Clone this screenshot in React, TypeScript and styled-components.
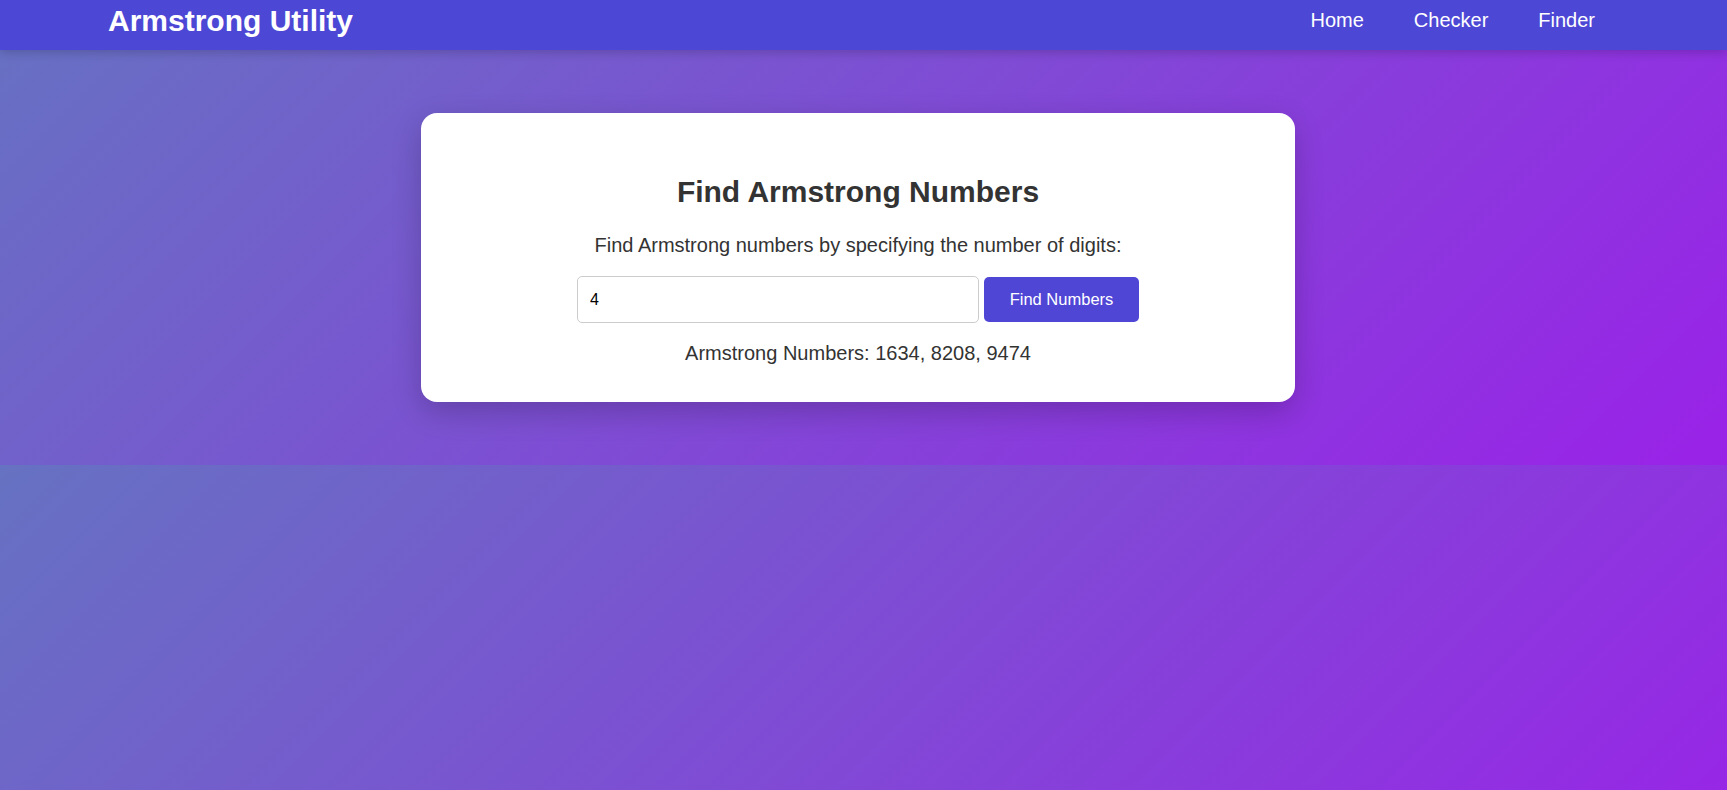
import React, { useState } from 'react';
import styled, { createGlobalStyle } from 'styled-components';

const GlobalStyle = createGlobalStyle`
  * {
    box-sizing: border-box;
  }
  body {
    margin: 0;
    font-family: "Liberation Sans", Arial, sans-serif;
    background: linear-gradient(135deg, #6672c2 0%, #9a22e8 100%);
  }
`;

const Header = styled.header`
  height: 50px;
  padding: 0 107px 9px 108px;
  display: flex;
  align-items: center;
  justify-content: space-between;
  background: #4d47d5;
  box-shadow: 0 2px 10px rgba(0, 0, 0, 0.2);
  position: relative;
`;

const Brand = styled.h1`
  margin: 0;
  font-size: 30px;
  font-weight: 700;
  color: #fff;
`;

const Nav = styled.nav`
  display: flex;
`;

const NavLink = styled.a`
  padding: 0 25px;
  font-size: 20px;
  color: #fff;
  text-decoration: none;
  cursor: pointer;
`;

const Main = styled.main`
  padding: 63px 11px 63px 0;
`;

const Card = styled.section`
  width: 874px;
  margin: 0 auto;
  padding: 62px 40px 37px;
  background: #fff;
  border-radius: 16px;
  box-shadow: 0 10px 30px rgba(0, 0, 0, 0.2);
  text-align: center;
  color: #333;
`;

const Title = styled.h2`
  margin: 0 0 25px;
  font-size: 30px;
  font-weight: 700;
`;

const Text = styled.p<{ $gap?: number }>`
  margin: 0 0 ${(p) => p.$gap ?? 0}px;
  font-size: 20px;
`;

const Row = styled.div`
  display: flex;
  justify-content: center;
  align-items: center;
  gap: 5px;
  margin-bottom: 19px;
`;

const Input = styled.input`
  width: 402px;
  height: 47px;
  padding: 0 12px;
  border: 1px solid #ccc;
  border-radius: 5px;
  font-family: inherit;
  font-size: 16px;
  color: #000;
  outline: none;
`;

const Button = styled.button`
  height: 45px;
  width: 155px;
  padding: 0;
  border: none;
  border-radius: 5px;
  background: #4f46d6;
  color: #fff;
  font-family: inherit;
  font-size: 16.5px;
  cursor: pointer;
`;

function isArmstrong(n: number) {
  const s = String(n);
  return s.split('').reduce((a, d) => a + Math.pow(Number(d), s.length), 0) === n;
}

function findArmstrong(digits: number) {
  const out: number[] = [];
  if (!digits || digits < 1 || digits > 6) return out;
  const start = digits === 1 ? 0 : Math.pow(10, digits - 1);
  for (let i = start; i < Math.pow(10, digits); i++) {
    if (isArmstrong(i)) out.push(i);
  }
  return out;
}

export default function App() {
  const [digits, setDigits] = useState('4');
  const [result, setResult] = useState<number[]>(findArmstrong(4));

  return (
    <>
      <GlobalStyle />
      <Header>
        <Brand>Armstrong Utility</Brand>
        <Nav>
          <NavLink>Home</NavLink>
          <NavLink>Checker</NavLink>
          <NavLink>Finder</NavLink>
        </Nav>
      </Header>
      <Main>
        <Card>
          <Title>Find Armstrong Numbers</Title>
          <Text $gap={19}>Find Armstrong numbers by specifying the number of digits:</Text>
          <Row>
            <Input type="text" value={digits} onChange={(e) => setDigits(e.target.value)} />
            <Button onClick={() => setResult(findArmstrong(Number(digits)))}>Find Numbers</Button>
          </Row>
          <Text>Armstrong Numbers: {result.join(', ')}</Text>
        </Card>
      </Main>
    </>
  );
}
